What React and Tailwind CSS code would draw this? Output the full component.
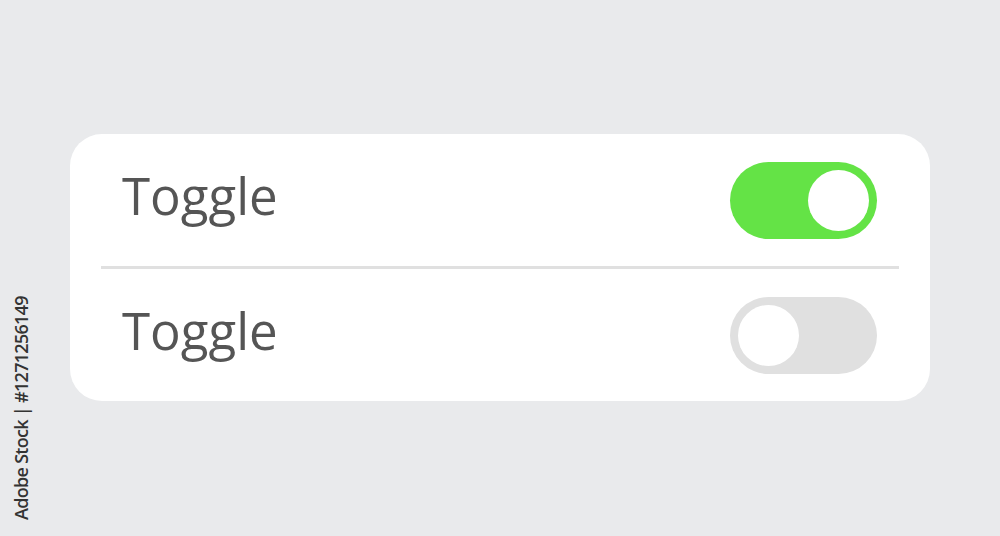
export default function App() {
  const rows = [
    { label: 'Toggle', on: true },
    { label: 'Toggle', on: false },
  ]

  return (
    <div className="relative w-[1000px] h-[536px] bg-[#e9eaec] pt-[134px] pl-[70px] font-['Open_Sans',sans-serif] overflow-hidden">
      {/* Card */}
      <div className="w-[860px] h-[267px] bg-white rounded-[32px] px-[31px] flex flex-col">
        {rows.map((row, i) => (
          <div key={i} className="flex flex-col">
            {i > 0 && <div className="h-[3px] bg-[#e0e0e0]" />}
            <div className="h-[132px] flex items-center justify-between pl-[21px] pr-[22px]">
              <span className="text-[51px] leading-none text-[#555555] -mt-[10px]">{row.label}</span>
              <div
                className={
                  row.on
                    ? 'w-[147px] h-[77px] rounded-full bg-[#64e346] p-[8px] flex justify-end'
                    : 'w-[147px] h-[77px] rounded-full bg-[#e0e0e0] p-[8px] flex justify-start'
                }
              >
                <div className="w-[61px] h-[61px] rounded-full bg-white" />
              </div>
            </div>
          </div>
        ))}
      </div>

      {/* stock id, vertical */}
      <div className="absolute left-[12px] top-[297px] h-[223px] flex items-center [writing-mode:vertical-rl] rotate-180 text-[18px] font-semibold tracking-[-0.7px] leading-none text-[#333333] whitespace-nowrap">
        Adobe Stock | #1271256149
      </div>
    </div>
  )
}
